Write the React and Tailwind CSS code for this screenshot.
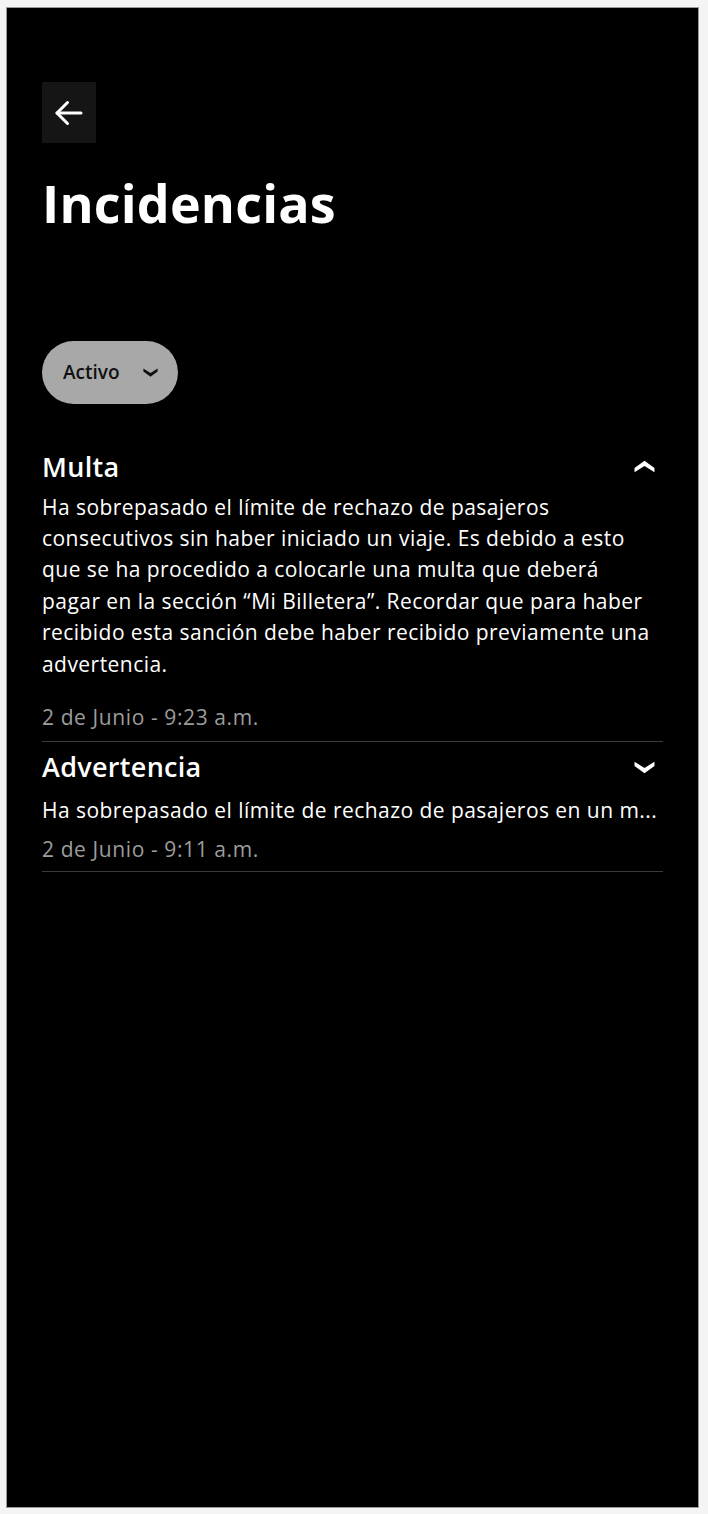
import React from "react";

function Chevron({ up = false, className = "" }) {
  return (
    <svg viewBox="0 0 20 12" className={className} fill="currentColor">
      {up ? (
        <path d="M10 0.5 L19.5 7.5 L19.5 11.5 L10 5.5 L0.5 11.5 L0.5 7.5 Z" />
      ) : (
        <path d="M10 11.5 L19.5 4.5 L19.5 0.5 L10 6.5 L0.5 0.5 L0.5 4.5 Z" />
      )}
    </svg>
  );
}

export default function App() {
  return (
    <div className="min-h-[1514px] bg-[#f4f4f4] pt-[7px] pl-[6px] pr-[9px] pb-[6px]" style={{ fontFamily: "'Open Sans', 'Noto Sans', sans-serif" }}>
      <div className="h-[1501px] bg-black border border-[#9a9a9a] px-[35px] pt-[74px]">
        <button className="w-[54px] h-[61px] bg-[#151515] flex items-center justify-center">
          <svg viewBox="0 0 24 24" className="w-[36px] h-[36px] text-white" fill="none" stroke="currentColor" strokeWidth="2" strokeLinecap="round" strokeLinejoin="round">
            <path d="M20 12H4" />
            <path d="M11 5l-7 7 7 7" />
          </svg>
        </button>
        <h1 className="mt-[26px] text-white text-[52px] font-bold leading-[1.3] tracking-[0.2px]">Incidencias</h1>
        <div className="mt-[104px]">
          <button className="w-[136px] h-[63px] rounded-full bg-[#a8a8a8] flex items-center pl-[21px] pr-[20px] justify-between text-[#111]">
            <span className="text-[19px] font-semibold">Activo</span>
            <Chevron className="w-[15px] h-[9px]" />
          </button>
        </div>
        <div className="mt-[44px] w-[621px]">
          <div className="border-b border-[#3a3a3a] pb-[8px]">
            <div className="flex items-center justify-between">
              <h2 className="text-white text-[27px] font-semibold leading-[38px] tracking-[0.3px]">Multa</h2>
              <Chevron up className="w-[21px] h-[13px] text-white mr-[8px]" />
            </div>
            <p className="text-white text-[21px] leading-[31.4px] mt-[6px] tracking-[0.45px]">
              Ha sobrepasado el límite de rechazo de pasajeros<br />
              consecutivos sin haber iniciado un viaje. Es debido a esto<br />
              que se ha procedido a colocarle una multa que deberá<br />
              pagar en la sección “Mi Billetera”. Recordar que para haber<br />
              recibido esta sanción debe haber recibido previamente una<br />
              advertencia.
            </p>
            <p className="text-[#9c9c9c] text-[21px] leading-[31px] mt-[22px] tracking-[0.6px]">2 de Junio - 9:23 a.m.</p>
          </div>
          <div className="border-b border-[#3a3a3a] pb-[6px] pt-[6px]">
            <div className="flex items-center justify-between">
              <h2 className="text-white text-[27px] font-semibold leading-[38px] tracking-[0.3px]">Advertencia</h2>
              <Chevron className="w-[21px] h-[13px] text-white mr-[8px]" />
            </div>
            <p className="text-white text-[21px] leading-[31.4px] mt-[9px] tracking-[0.45px] whitespace-nowrap">
              Ha sobrepasado el límite de rechazo de pasajeros en un m...
            </p>
            <p className="text-[#9c9c9c] text-[21px] leading-[31px] mt-[8px] tracking-[0.6px]">2 de Junio - 9:11 a.m.</p>
          </div>
        </div>
      </div>
    </div>
  );
}
